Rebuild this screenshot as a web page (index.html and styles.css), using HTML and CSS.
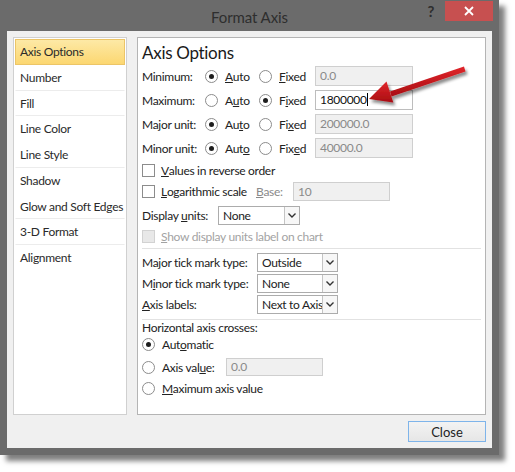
FILE: index.html
```html
<!DOCTYPE html>
<html lang="en">
<head>
  <meta charset="UTF-8" />
  <title>Format Axis</title>
  <link rel="stylesheet" href="styles.css">
</head>
<body>
  <div class="window">
    <div class="titlebar">
      <span></span>
      <span class="title">Format Axis</span>
      <div class="controls">
        <span class="help">?</span>
        <span class="close-x">
          <svg width="10" height="10" viewBox="0 0 10 10"><path d="M1 1 L9 9 M9 1 L1 9" stroke="#fff" stroke-width="1.8"/></svg>
        </span>
      </div>
    </div>

    <div class="client">
      <div class="panes">
        <!-- Category list -->
        <ul class="nav">
          <li class="active sep">Axis Options</li>
          <li class="sep">Number</li>
          <li class="sep">Fill</li>
          <li>Line Color</li>
          <li class="sep">Line Style</li>
          <li>Shadow</li>
          <li class="sep">Glow and Soft Edges</li>
          <li class="sep">3-D Format</li>
          <li>Alignment</li>
        </ul>

        <!-- Options page -->
        <div class="options">
          <h1>Axis Options</h1>

          <div class="axis-row">
            <span class="lbl">Minimum:</span>
            <span class="opt auto"><span class="radio on"></span><u>A</u>uto</span>
            <span class="opt fixed"><span class="radio"></span><u>F</u>ixed</span>
            <div class="field">0.0</div>
          </div>
          <div class="axis-row">
            <span class="lbl">Maximum:</span>
            <span class="opt auto"><span class="radio"></span>A<u>u</u>to</span>
            <span class="opt fixed"><span class="radio on"></span>F<u>i</u>xed</span>
            <div class="field live">1800000<span class="caret"></span></div>
          </div>
          <div class="axis-row">
            <span class="lbl">Major unit:</span>
            <span class="opt auto"><span class="radio on"></span>Au<u>t</u>o</span>
            <span class="opt fixed"><span class="radio"></span>Fi<u>x</u>ed</span>
            <div class="field">200000.0</div>
          </div>
          <div class="axis-row">
            <span class="lbl">Minor unit:</span>
            <span class="opt auto"><span class="radio on"></span>Aut<u>o</u></span>
            <span class="opt fixed"><span class="radio"></span>Fix<u>e</u>d</span>
            <div class="field">40000.0</div>
          </div>

          <div class="row check-row first">
            <span class="check"></span><u>V</u>alues in reverse order
          </div>
          <div class="row check-row log">
            <span class="log-lbl"><span class="check"></span><u>L</u>ogarithmic scale</span>
            <span class="base-lbl"><u>B</u>ase:</span>
            <div class="field base">10</div>
          </div>
          <div class="row units-row">
            <span class="units-lbl">Display <u>u</u>nits:</span>
            <div class="select units"><span class="value">None</span><span class="drop"><svg width="8" height="5" viewBox="0 0 8 5"><path d="M0.5 0.5 L4 4 L7.5 0.5" fill="none" stroke="#333" stroke-width="1.4"/></svg></span></div>
          </div>
          <div class="row check-row disabled show-row">
            <span class="check"></span><u>S</u>how display units label on chart
          </div>

          <div class="divider first-div"></div>

          <div class="row tick-row">
            <span class="tick-lbl">Ma<u>j</u>or tick mark type:</span>
            <div class="select tick"><span class="value">Outside</span><span class="drop"><svg width="8" height="5" viewBox="0 0 8 5"><path d="M0.5 0.5 L4 4 L7.5 0.5" fill="none" stroke="#333" stroke-width="1.4"/></svg></span></div>
          </div>
          <div class="row tick-row">
            <span class="tick-lbl">M<u>i</u>nor tick mark type:</span>
            <div class="select tick"><span class="value">None</span><span class="drop"><svg width="8" height="5" viewBox="0 0 8 5"><path d="M0.5 0.5 L4 4 L7.5 0.5" fill="none" stroke="#333" stroke-width="1.4"/></svg></span></div>
          </div>
          <div class="row tick-row">
            <span class="tick-lbl"><u>A</u>xis labels:</span>
            <div class="select tick"><span class="value">Next to Axis</span><span class="drop"><svg width="8" height="5" viewBox="0 0 8 5"><path d="M0.5 0.5 L4 4 L7.5 0.5" fill="none" stroke="#333" stroke-width="1.4"/></svg></span></div>
          </div>

          <div class="divider second-div"></div>

          <div class="row cross-title">Horizontal axis crosses:</div>
          <div class="row cross-row auto-row">
            <span class="radio on"></span>Aut<u>o</u>matic
          </div>
          <div class="row cross-row value-row">
            <span class="value-lbl"><span class="radio"></span>Axis val<u>u</u>e:</span>
            <div class="field cross">0.0</div>
          </div>
          <div class="row cross-row max-row">
            <span class="radio"></span><u>M</u>aximum axis value
          </div>
        </div>
      </div>

      <div class="footer">
        <button class="close-btn">Close</button>
      </div>
    </div>
  </div>

  <!-- callout arrow drawn over the dialog -->
  <svg class="callout" width="515" height="472" viewBox="0 0 515 472">
    <defs>
      <filter id="shade" x="-20%" y="-50%" width="140%" height="200%">
        <feDropShadow dx="2" dy="3" stdDeviation="1.6" flood-color="#000" flood-opacity="0.45"/>
      </filter>
      <linearGradient id="red" x1="0" y1="0" x2="0" y2="1">
        <stop offset="0" stop-color="#e0262b"/>
        <stop offset="1" stop-color="#a80d12"/>
      </linearGradient>
    </defs>
    <g filter="url(#shade)">
      <path d="M464 66.5 L390 91.5 L391.5 96.5 L465.5 71.5 Z" fill="url(#red)"/>
      <path d="M369 99 L386.5 81.6 L393.3 102.5 Z" fill="url(#red)"/>
    </g>
  </svg>
</body>
</html>
```

FILE: styles.css
```css
/* Dialog chrome */
body {
  margin: 0;
  background: #fff;
  font-family: "Segoe UI", Lato, sans-serif;
  font-size: 12px;
  letter-spacing: -0.3px;
  color: #222;
  width: 515px;
  height: 472px;
  position: relative;
  overflow: hidden;
  white-space: nowrap;
}

.window {
  width: 499px;
  height: 455px;
  background: #6b6b6b;
  box-shadow: 6px 6px 5px rgba(0, 0, 0, 0.5);
  display: flex;
  flex-direction: column;
}

.titlebar {
  height: 31px;
  display: grid;
  grid-template-columns: 1fr auto 1fr;
  align-items: start;
  flex-shrink: 0;
}

.title {
  font-size: 15px;
  letter-spacing: -0.1px;
  color: #2e2e2e;
  line-height: 34px;
}

.controls {
  display: flex;
  justify-content: flex-end;
  align-items: flex-start;
}

.help {
  font-size: 15px;
  font-weight: bold;
  color: #2e2e2e;
  margin-top: 2px;
  margin-right: 11px;
  line-height: 18px;
}

.close-x {
  width: 48px;
  height: 20px;
  margin-top: 1px;
  margin-right: 6px;
  background: #c75050;
  display: flex;
  align-items: center;
  justify-content: center;
}

.client {
  flex: 1;
  margin: 0 7px 7px;
  background: #f0f0f0;
  padding: 6px;
  display: flex;
  flex-direction: column;
}

.panes {
  display: flex;
  gap: 10px;
  height: 378px;
}

/* Left category list */
.nav {
  width: 114px;
  margin: 0;
  padding: 1px;
  list-style: none;
  background: #fff;
  border: 1px solid #d0d0d0;
  box-sizing: border-box;
}

.nav li {
  height: 25.75px;
  line-height: 24px;
  padding-left: 4px;
  box-sizing: border-box;
  color: #2a2a2a;
  border: 1px solid transparent;
}

.nav li.sep {
  border-bottom-color: #ececec;
}

.nav li.active {
  background: linear-gradient(#fde9a6, #fcd771);
  border-color: #ecc567;
}

/* Right options page */
.options {
  flex: 1;
  background: #fff;
  border: 1px solid #b4b4b4;
  padding: 3px 4px 0;
}

.options h1 {
  margin: 0;
  font-size: 17px;
  font-weight: normal;
  height: 23px;
  line-height: 23px;
  color: #1a1a1a;
}

.axis-row,
.row {
  display: flex;
  align-items: center;
}

.axis-row {
  height: 24px;
}

.lbl {
  width: 63px;
}

.opt {
  display: flex;
  align-items: center;
}

.opt.auto {
  width: 54px;
}

.opt.fixed {
  width: 56px;
}

.radio {
  width: 13px;
  height: 13px;
  border: 1px solid #8c8c8c;
  border-radius: 50%;
  background: #fff;
  box-sizing: border-box;
  display: inline-flex;
  align-items: center;
  justify-content: center;
  margin-right: 7px;
  flex-shrink: 0;
}

.radio.on::after {
  content: "";
  width: 5px;
  height: 5px;
  border-radius: 50%;
  background: #1e1e1e;
}

.field {
  width: 98px;
  height: 20px;
  box-sizing: border-box;
  border: 1px solid #cfcfcf;
  background: #f0f0f0;
  color: #8a8a8a;
  padding: 0 4px;
  line-height: 18px;
}

.field.live {
  background: #fff;
  border-color: #bdbdbd;
  color: #111;
}

.caret {
  display: inline-block;
  width: 1px;
  height: 13px;
  background: #000;
  vertical-align: -2px;
}

.check {
  width: 13px;
  height: 13px;
  border: 1px solid #8c8c8c;
  background: #fff;
  box-sizing: border-box;
  margin-right: 6px;
  flex-shrink: 0;
}

.check-row.first {
  height: 20px;
}

.check-row.log {
  height: 22px;
}

.log-lbl {
  width: 114px;
  display: flex;
  align-items: center;
}

.base-lbl {
  width: 37px;
  color: #8a8a8a;
}

.field.base {
  width: 97px;
  height: 19px;
}

.units-row {
  height: 26px;
}

.units-lbl {
  width: 76px;
}

.select {
  height: 19px;
  box-sizing: border-box;
  border: 1px solid #acacac;
  background: #fff;
  display: flex;
}

.select .value {
  flex: 1;
  padding-left: 4px;
  line-height: 17px;
  overflow: hidden;
}

.select .drop {
  width: 14px;
  flex-shrink: 0;
  border-left: 1px solid #c4c4c4;
  background: #f7f7f7;
  display: flex;
  align-items: center;
  justify-content: center;
}

.select.units {
  width: 82px;
}

.select.tick {
  width: 81px;
}

.show-row {
  height: 17px;
}

.disabled {
  color: #a3a3a3;
}

.disabled .check {
  background: #e8e8e8;
  border-color: #d2d2d2;
}

.divider {
  border-top: 1px solid #e2e2e2;
}

.first-div {
  margin: 3px 0 3px;
}

.second-div {
  margin: 4px 0 0;
}

.tick-row {
  height: 21px;
}

.tick-lbl {
  width: 115px;
}

.cross-title {
  height: 15px;
}

.auto-row {
  height: 19px;
}

.value-row {
  height: 26px;
}

.max-row {
  height: 16px;
}

.value-lbl {
  width: 84px;
  display: flex;
  align-items: center;
}

.field.cross {
  width: 97px;
  height: 18px;
  line-height: 16px;
}

.footer {
  display: flex;
  justify-content: flex-end;
  margin-top: 6px;
}

.close-btn {
  width: 78px;
  height: 21px;
  border: 1px solid #7eb4ea;
  background: linear-gradient(#f3f3f3, #e6e6e6);
  font-family: inherit;
  font-size: 13px;
  letter-spacing: 0;
  color: #222;
  padding: 0;
}

.callout {
  position: absolute;
  left: 0;
  top: 0;
  pointer-events: none;
}
```
